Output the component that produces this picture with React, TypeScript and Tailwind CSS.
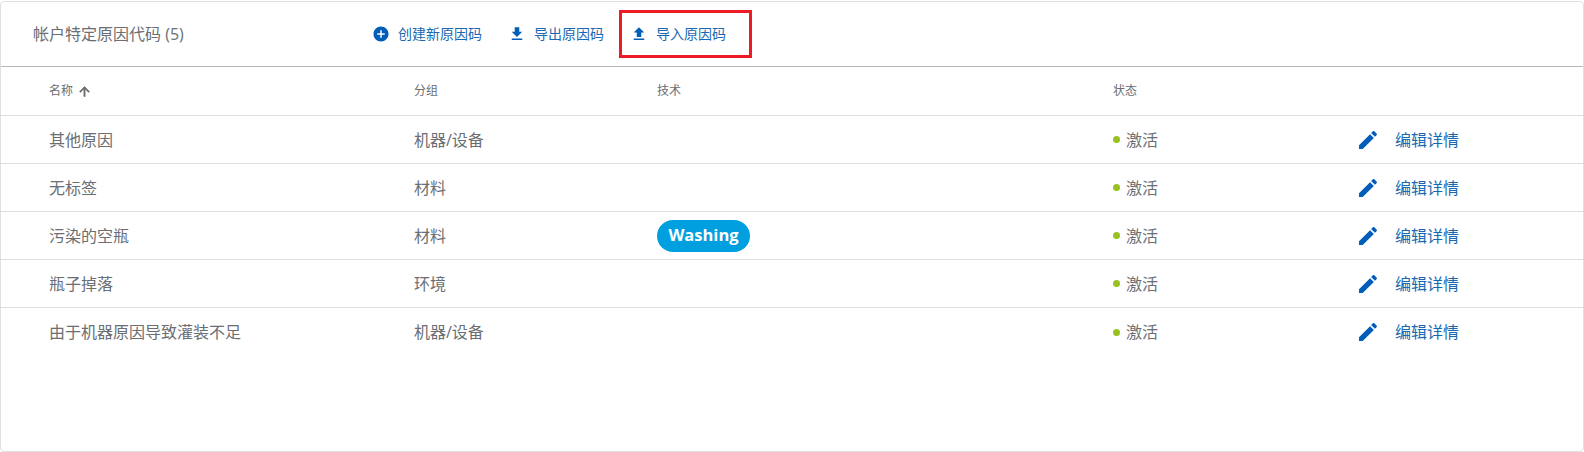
import React from 'react';

const ICONS = {
  add: 'M12 2C6.48 2 2 6.48 2 12s4.48 10 10 10 10-4.48 10-10S17.52 2 12 2zm5 11h-4v4h-2v-4H7v-2h4V7h2v4h4v2z',
  download: 'M19 9h-4V3H9v6H5l7 7 7-7zM5 18v2h14v-2H5z',
  upload: 'M9 16h6v-6h4l-7-7-7 7h4zm-4 2h14v2H5z',
  arrowUp: 'M4 12l1.41 1.41L11 7.83V20h2V7.83l5.58 5.59L20 12l-8-8-8 8z',
  edit: 'M3 17.25V21h3.75L17.81 9.94l-3.75-3.75L3 17.25zM20.71 7.04c.39-.39.39-1.02 0-1.41l-2.34-2.34c-.39-.39-1.02-.39-1.41 0l-1.83 1.83 3.75 3.75 1.83-1.83z',
};

const Icon: React.FC<{ name: keyof typeof ICONS; size: number; className?: string }> = ({ name, size, className }) => (
  <svg width={size} height={size} viewBox="0 0 24 24" fill="currentColor" className={className}>
    <path d={ICONS[name]} />
  </svg>
);

const rows = [
  { name: '其他原因', group: '机器/设备' },
  { name: '无标签', group: '材料' },
  { name: '污染的空瓶', group: '材料', tech: 'Washing' },
  { name: '瓶子掉落', group: '环境' },
  { name: '由于机器原因导致灌装不足', group: '机器/设备' },
];

const actions = [
  { icon: 'add' as const, label: '创建新原因码' },
  { icon: 'download' as const, label: '导出原因码' },
  { icon: 'upload' as const, label: '导入原因码' },
];

export default function App() {
  return (
    <div className="h-[452px] w-[1584px] bg-white pt-px font-['Open_Sans','Noto_Sans_CJK_SC',sans-serif]">
      <div className="relative flex h-[451px] flex-col rounded-[4px] border border-[#dfdfdf] bg-white">
        {/* Toolbar */}
        <div className="flex h-[65px] shrink-0 items-center border-b border-[#b5b5b5] pl-[32px]">
          <span className="w-[339px] text-base text-[#6b6e72]">帐户特定原因代码 (5)</span>
          <div className="flex items-center gap-[26px]">
            {actions.map((a) => (
              <button key={a.label} className="flex items-center gap-[8px] text-sm text-[#1a68b0]">
                <Icon name={a.icon} size={18} className="text-[#005eb8]" />
                {a.label}
              </button>
            ))}
          </div>
        </div>

        {/* Highlight round the import action */}
        <div className="absolute left-[618px] top-[8px] h-[48px] w-[133px] border-[3px] border-[#ed1c24]" />

        {/* Column headers */}
        <div className="flex h-[49px] shrink-0 items-center border-b border-[#dfdfdf] pl-[48px] text-xs text-[#6b6e72]">
          <div className="flex w-[365px] items-center gap-[4px]">
            名称
            <Icon name="arrowUp" size={15} className="stroke-[#6f6f6f] stroke-1 text-[#6f6f6f]" />
          </div>
          <div className="w-[243px]">分组</div>
          <div className="w-[456px]">技术</div>
          <div>状态</div>
        </div>

        {/* Rows */}
        {rows.map((r) => (
          <div key={r.name} className="flex h-[48px] shrink-0 items-center border-b border-[#dfdfdf] pl-[48px] text-base text-[#6b6e72] last:border-b-0">
            <div className="w-[365px]">{r.name}</div>
            <div className="w-[243px]">{r.group}</div>
            <div className="w-[456px]">
              {r.tech && (
                <span className="inline-flex h-[32px] w-[93px] items-center justify-center rounded-full bg-[#009fdf] text-[16.5px] font-bold text-white">
                  {r.tech}
                </span>
              )}
            </div>
            <div className="flex w-[243px] items-center gap-[6px]">
              <span className="h-[7px] w-[7px] rounded-full bg-[#97c11f]" />
              激活
            </div>
            <button className="flex items-center gap-[15px] text-[#1a68b0]">
              <Icon name="edit" size={24} className="text-[#005eb8]" />
              编辑详情
            </button>
          </div>
        ))}
      </div>
    </div>
  );
}
